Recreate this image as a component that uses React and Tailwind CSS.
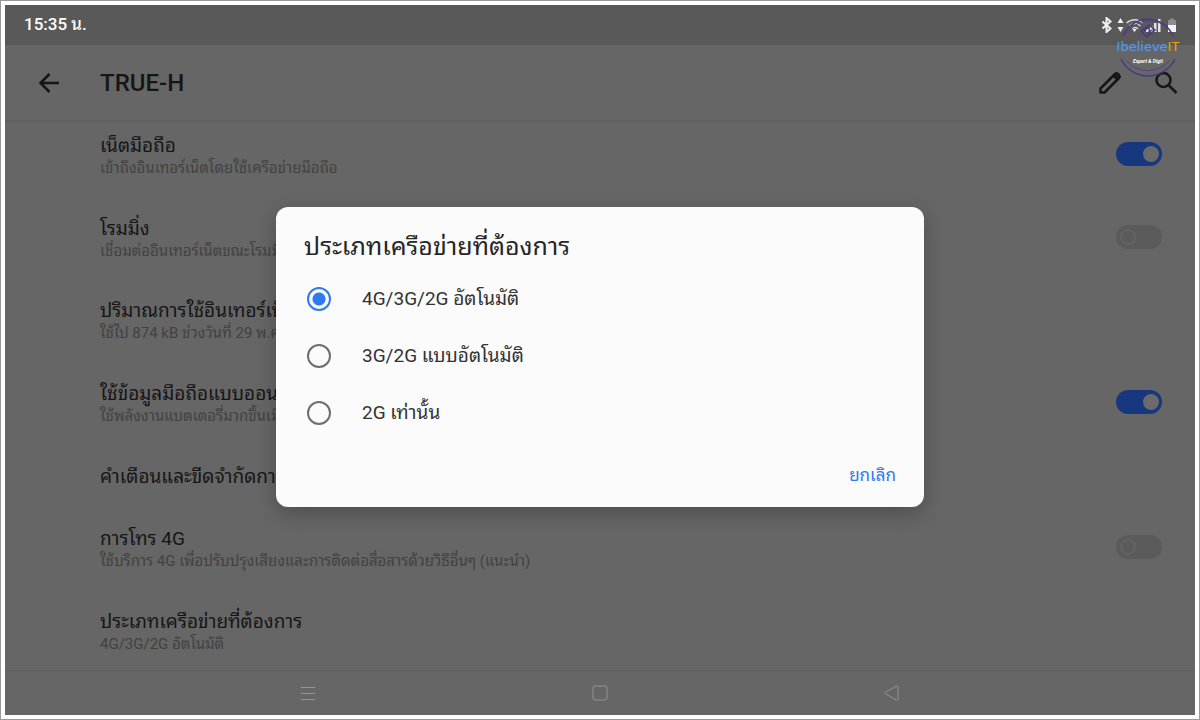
import { useState } from 'react';

const settings = [
  { id: 'data', title: 'เน็ตมือถือ', detail: 'เข้าถึงอินเทอร์เน็ตโดยใช้เครือข่ายมือถือ', toggle: 'on' },
  { id: 'roaming', title: 'โรมมิ่ง', detail: 'เชื่อมต่ออินเทอร์เน็ตขณะโรมมิ่ง', toggle: 'off' },
  { id: 'usage', title: 'ปริมาณการใช้อินเทอร์เน็ต', detail: 'ใช้ไป 874 kB ช่วงวันที่ 29 พ.ค. - 28 มิ.ย.' },
  { id: 'always', title: 'ใช้ข้อมูลมือถือแบบออนไลน์', detail: 'ใช้พลังงานแบตเตอรี่มากขึ้นเมื่อเปิด', toggle: 'on' },
  { id: 'limit', title: 'คำเตือนและขีดจำกัดการใช้' },
  { id: 'volte', title: 'การโทร 4G', detail: 'ใช้บริการ 4G เพื่อปรับปรุงเสียงและการติดต่อสื่อสารด้วยวิธีอื่นๆ (แนะนำ)', toggle: 'off' },
  { id: 'type', title: 'ประเภทเครือข่ายที่ต้องการ', detail: '4G/3G/2G อัตโนมัติ' },
];

const networkTypes = [
  { value: '4g', label: '4G/3G/2G อัตโนมัติ' },
  { value: '3g', label: '3G/2G แบบอัตโนมัติ' },
  { value: '2g', label: '2G เท่านั้น' },
];

function StatusIcons() {
  return (
    <svg width="76" height="16" viewBox="0 0 76 16" fill="none" aria-hidden="true">
      <path d="M.5 4.500l8 7-4 3.500V1l4 3.500-8 7" stroke="#f0f0f0" strokeWidth="2" />
      <path d="M18.500 1l3 5h-6zM18.500 15l3-5h-6z" fill="#f0f0f0" />
      <path d="M24.500 6c5-4.500 11.500-4.500 16 0M27 9c3.500-3 8-3 11.500 0M29.500 11.700c2-1.600 4.500-1.600 6.500 0" stroke="#d8d8d8" strokeWidth="1.500" />
      <path d="M30.500 12.500q2-1.500 4 0l-2 2.500z" fill="#ececec" />
      <path d="M44 12h2.500v3H44zM48 9h2.500v6H48zM52 6h2.500v9H52zM56 2h2.500v13H56z" fill="#e4e4e4" />
      <path d="M66 3h2V1.500h4V3h2v5h-8z" fill="#8d8d8d" />
      <path d="M66 8h8v7h-8z" fill="#f4f4f4" />
    </svg>
  );
}

function Watermark() {
  return (
    <div className="absolute top-3 right-[15px] w-16">
      <svg viewBox="0 0 64 64" className="block w-full" fill="none" aria-hidden="true">
        <path d="M7 19A27 27 0 0 1 57 19M5 42A30 30 0 0 0 59 42" stroke="#4d3784" strokeWidth="1.500" />
        <path d="M12 16A25 25 0 0 1 46 7M10 43A28 28 0 0 0 54 43" stroke="#56408a" strokeWidth="1" />
        <path d="M25 14l8-6 6 5-8 7zM28 14l5-4M31 17l5-4" stroke="#4d3784" strokeWidth="1.500" />
      </svg>
      <div className="absolute inset-0 flex flex-col items-center justify-center pt-2 whitespace-nowrap">
        <span className="font-['DejaVu_Sans',sans-serif] text-[13px] leading-4 text-[#4f9bff]">
          Ibelieve<span className="text-[#e9a400]">IT</span>
        </span>
        <span className="text-[5px] leading-3 font-bold italic text-white">Expert &amp; Digit</span>
      </div>
    </div>
  );
}

function Toggle({ label, on }) {
  return (
    <label className="relative block w-[46px] h-6 mb-1 shrink-0">
      <input type="checkbox" role="switch" aria-label={label} defaultChecked={on}
             className="peer block w-full h-full appearance-none rounded-full bg-[#5b5b5b] checked:bg-[#17387f]" />
      <span className="absolute top-1 left-1 size-4 rounded-full border-2 border-[#636363] peer-checked:left-[27px] peer-checked:border-[#6b6b6b] peer-checked:bg-[#6b6b6b]" />
    </label>
  );
}

function SettingRow({ item }) {
  return (
    <li className="flex items-center justify-between">
      <div className="whitespace-nowrap">
        <p className="text-[19px] leading-6 text-[#161616]">{item.title}</p>
        {item.detail && <p className="text-[15px] leading-5 text-[#424242]">{item.detail}</p>}
      </div>
      {item.toggle && <Toggle label={item.title} on={item.toggle === 'on'} />}
    </li>
  );
}

function NetworkDialog() {
  const [selected, setSelected] = useState('4g');

  return (
    <div className="absolute inset-0 flex items-center justify-center pb-[7px]">
      <div role="dialog" aria-labelledby="dialog-title"
           className="w-full max-w-[648px] rounded-xl bg-[#fbfbfb] pt-6 pb-[13px] shadow-[0_6px_20px_rgba(0,0,0,0.25)]">
        <h2 id="dialog-title" className="px-7 mb-2 text-[25px] leading-8 text-[#262626]">ประเภทเครือข่ายที่ต้องการ</h2>
        {networkTypes.map((t) => (
          <label key={t.value} className="flex items-center gap-[31px] h-[57px] pl-[31px] text-[19px] text-[#333]">
            <input type="radio" name="network" value={t.value} checked={selected === t.value}
                   onChange={() => setSelected(t.value)}
                   className="appearance-none size-6 rounded-full border-2 border-[#6e6e6e] checked:border-[#2f7af0] checked:bg-[radial-gradient(circle,#2f7af0_6px,transparent_7px)]" />
            {t.label}
          </label>
        ))}
        <div className="flex justify-end mt-4 px-7">
          <button type="button" className="h-9 text-[17px] text-[#2f7af0]">ยกเลิก</button>
        </div>
      </div>
    </div>
  );
}

export default function App() {
  return (
    <div className="flex min-h-screen border border-[#999] bg-white p-1 font-[Roboto,'Noto_Sans_Thai_Looped',Loma,Waree,'Noto_Sans',sans-serif]">
      <div className="relative flex flex-1 flex-col overflow-hidden bg-[#666]">
        <div className="flex items-center justify-between h-10 pl-[19px] pr-[17px] bg-[#595959]">
          <span className="text-[17px] font-medium text-white">15:35 น.</span>
          <StatusIcons />
        </div>

        <header className="flex items-center h-[77px] pl-8 pr-[17px] border-b-2 border-[#606060] text-[#161616]">
          <button type="button" aria-label="ย้อนกลับ" className="mr-[39px]">
            <svg width="24" height="24" viewBox="0 0 24 24" fill="none" stroke="currentColor" strokeWidth="2.500">
              <path d="M22 12H4M12.500 3L3.500 12l9 9" />
            </svg>
          </button>
          <h1 className="text-2xl font-medium">TRUE-H</h1>
          <div className="flex gap-8 ml-auto">
            <button type="button" aria-label="แก้ไข">
              <svg width="24" height="24" viewBox="0 0 24 24" fill="none" stroke="currentColor" strokeWidth="2.500" strokeLinejoin="round">
                <path d="M2.500 21.500v-4L17 3q1.500-1.200 3 0l1 1q1.200 1.500 0 3L6.500 21.500z" />
                <path d="M16 4l4 4" strokeWidth="4" />
              </svg>
            </button>
            <button type="button" aria-label="ค้นหา">
              <svg width="24" height="24" viewBox="0 0 24 24" fill="none" stroke="currentColor" strokeWidth="2.500">
                <circle cx="9.500" cy="9" r="7" />
                <path d="M14.500 14l8 8" />
              </svg>
            </button>
          </div>
        </header>

        <ul className="flex flex-1 flex-col justify-between pt-3 pb-4 pl-[95px] pr-[33px]">
          {settings.map((item) => <SettingRow key={item.id} item={item} />)}
        </ul>

        <nav className="flex items-center justify-center gap-[276px] h-[45px] border-t border-[#5f5f5f] text-[#939393]">
          <button type="button" aria-label="แอปล่าสุด">
            <svg width="16" height="16" viewBox="0 0 16 16" stroke="currentColor">
              <path d="M1 2.500h14M1 8.500h14M1 14.500h14" />
            </svg>
          </button>
          <button type="button" aria-label="หน้าหลัก">
            <svg width="16" height="16" viewBox="0 0 16 16" fill="none" stroke="currentColor">
              <rect x="1" y="1" width="14" height="14" rx="2" />
            </svg>
          </button>
          <button type="button" aria-label="กลับ">
            <svg width="16" height="16" viewBox="0 0 16 16" fill="none" stroke="currentColor" strokeLinejoin="round">
              <path d="M1.500 7.200L12.500 1q1.500-.5 1.500 1v12q0 1.500-1.500 1L1.500 8.800q-1-.8 0-1.600z" />
            </svg>
          </button>
        </nav>

        <Watermark />
        <NetworkDialog />
      </div>
    </div>
  );
}
